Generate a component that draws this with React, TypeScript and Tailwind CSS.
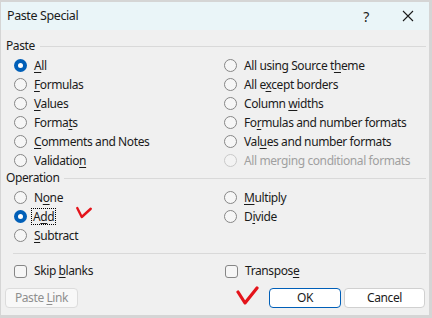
import React from "react";

// label uses "&" before the access-key letter, like a Win32 dialog resource
function Label({ text }: { text: string }) {
  const i = text.indexOf("&");
  if (i < 0) return <>{text}</>;
  return (
    <>
      {text.slice(0, i)}
      <span className="underline underline-offset-2">{text[i + 1]}</span>
      {text.slice(i + 2)}
    </>
  );
}

function Radio({
  text,
  checked,
  disabled,
  focused,
}: {
  text: string;
  checked?: boolean;
  disabled?: boolean;
  focused?: boolean;
}) {
  return (
    <div className="flex items-center h-[19px]">
      {checked ? (
        <span className="w-[13px] h-[13px] rounded-full bg-[#005fb8] flex items-center justify-center shrink-0">
          <span className="w-[5px] h-[5px] rounded-full bg-white" />
        </span>
      ) : (
        <span
          className={
            disabled
              ? "w-[13px] h-[13px] rounded-full border border-[#c9c9c9] bg-[#f3f3f3] shrink-0"
              : "w-[13px] h-[13px] rounded-full border border-[#868686] bg-[#f6f6f6] shrink-0"
          }
        />
      )}
      <span
        className={
          (disabled ? "text-[#a0a0a0] " : "text-[#1b1b1b] ") +
          (focused
            ? "ml-[5px] px-px outline outline-1 outline-dotted outline-black leading-[15px]"
            : "ml-[7px]")
        }
      >
        <Label text={text} />
      </span>
    </div>
  );
}

function Check({ text }: { text: string }) {
  return (
    <div className="flex items-center h-[18px]">
      <span className="w-[13px] h-[13px] rounded-[3px] border border-[#868686] bg-[#f6f6f6] shrink-0" />
      <span className="ml-[7px] text-[#1b1b1b]">
        <Label text={text} />
      </span>
    </div>
  );
}

function Group({ title, className }: { title: string; className?: string }) {
  return (
    <div className={"flex items-center h-[16px] pl-[5px] pr-[3px] " + (className ?? "")}>
      <span className="text-[#1b1b1b]">{title}</span>
      <span className="flex-1 ml-[5px] h-px bg-[#d9d9d9]" />
    </div>
  );
}

function RedTick({ d, className }: { d: string; className: string }) {
  return (
    <svg className={"absolute pointer-events-none " + className} viewBox="0 0 24 20" fill="none">
      <path d={d} stroke="#e4141b" strokeWidth="3.2" strokeLinecap="round" strokeLinejoin="round" />
    </svg>
  );
}

export default function App() {
  return (
    <div
      className="w-[432px] h-[318px] bg-[#f0f0f0] border-t-2 border-l border-r-[3px] border-b-[3px] border-[#d5d5d5] text-[12px] tracking-[-0.4px] flex flex-col select-none"
      style={{ fontFamily: '"Noto Sans", "Liberation Sans", sans-serif' }}
    >
      {/* title bar */}
      <div className="h-[28px] bg-[#eaf5f8] flex items-center shrink-0">
        <span className="ml-[6px] text-[12.5px] text-[#1b1b1b]">Paste Special</span>
        <span className="ml-auto text-[14px] text-[#1b1b1b] mr-[33px]">?</span>
        <svg className="w-[12px] h-[12px] mr-[15px]" viewBox="0 0 12 12">
          <path d="M1 1L11 11M11 1L1 11" stroke="#1b1b1b" strokeWidth="1.1" />
        </svg>
      </div>

      <Group title="Paste" className="mt-[8px]" />
      <div className="grid grid-cols-[210px_1fr] pl-[13px] mt-[2px]">
        <div className="flex flex-col">
          <Radio text="&All" checked />
          <Radio text="&Formulas" />
          <Radio text="&Values" />
          <Radio text="Forma&ts" />
          <Radio text="&Comments and Notes" />
          <Radio text="Validatio&n" />
        </div>
        <div className="flex flex-col">
          <Radio text="All using Source t&heme" />
          <Radio text="All e&xcept borders" />
          <Radio text="Column &widths" />
          <Radio text="Fo&rmulas and number formats" />
          <Radio text="Val&ues and number formats" />
          <Radio text="All merging conditional formats" disabled />
        </div>
      </div>

      <Group title="Operation" />
      <div className="relative grid grid-cols-[210px_1fr] pl-[13px] mt-[2px]">
        <div className="flex flex-col">
          <Radio text="N&one" />
          <Radio text="A&dd" checked focused />
          <Radio text="&Subtract" />
        </div>
        <div className="flex flex-col">
          <Radio text="&Multiply" />
          <Radio text="D&ivide" />
        </div>
        <RedTick className="left-[73px] top-[17px] w-[20px] h-[15px]" d="M3 4L9 16L21 5" />
      </div>

      <div className="mt-[8px] ml-[12px] mr-[3px] h-px bg-[#d9d9d9]" />

      <div className="grid grid-cols-[211px_1fr] pl-[13px] mt-[8px]">
        <Check text="Skip &blanks" />
        <Check text="Transpos&e" />
      </div>

      <div className="relative flex items-center mt-[8px] pl-[4px] pr-[4px]">
        <button className="w-[73px] h-[20px] rounded-[4px] border border-[#dcdcdc] bg-[#f8f8f8] text-[#8f8f8f]">
          <Label text="Paste &Link" />
        </button>
        <button className="ml-auto w-[72px] h-[20px] rounded-[4px] border border-[#005fb8] bg-white text-[#1b1b1b]">
          OK
        </button>
        <button className="ml-[3px] w-[81px] h-[20px] rounded-[4px] border border-[#d0d0d0] bg-white text-[#1b1b1b]">
          Cancel
        </button>
        <RedTick className="left-[233px] top-[-2px] w-[26px] h-[20px]" d="M3 6L10 17L22 2" />
      </div>
    </div>
  );
}
